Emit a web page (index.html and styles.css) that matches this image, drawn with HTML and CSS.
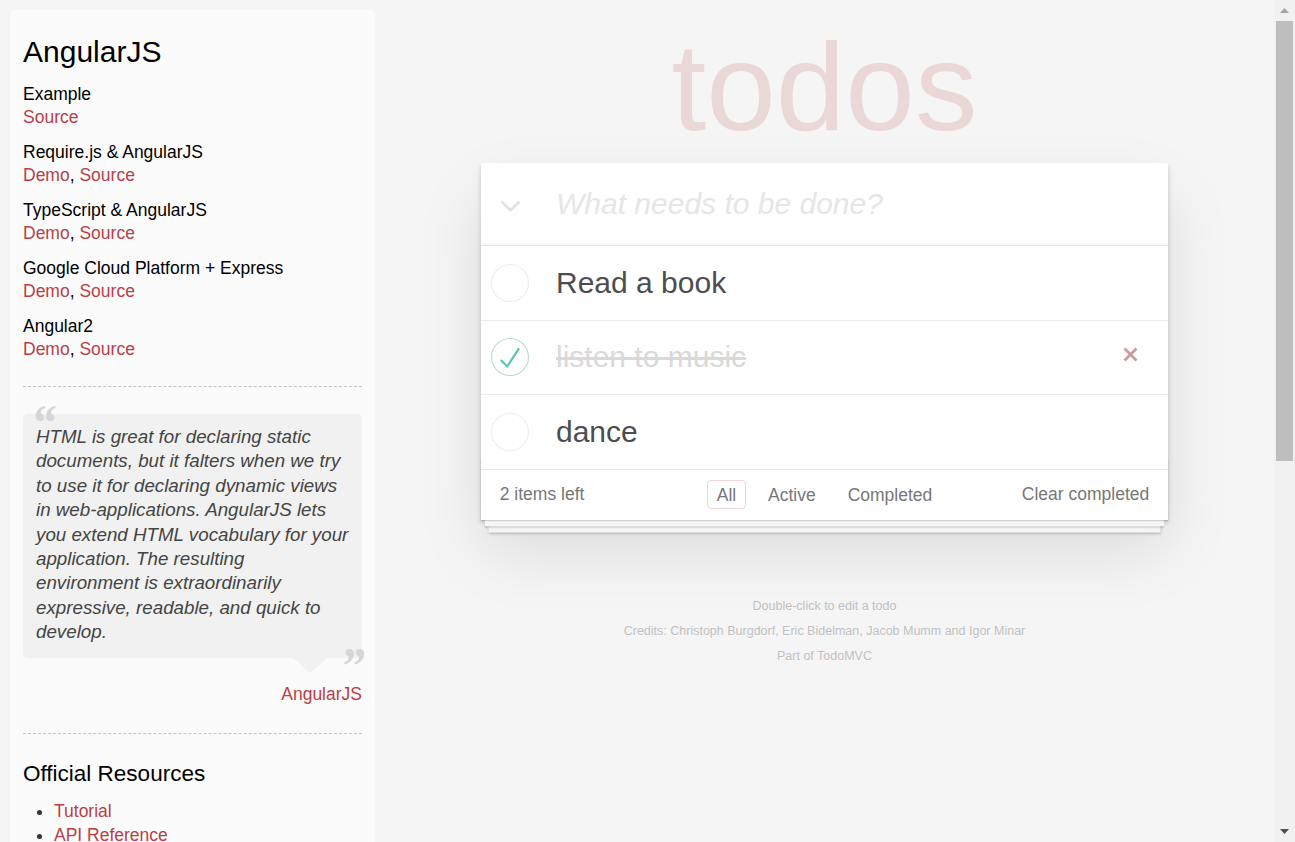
FILE: index.html
```html
<!DOCTYPE html>
<html lang="en">
<head>
<meta charset="utf-8">
<title>AngularJS • TodoMVC</title>
<link rel="stylesheet" href="styles.css">
</head>
<body>
<div class="page">
  <div class="content">
    <aside class="learn">
      <h2 class="learn-title">AngularJS</h2>
      <div class="examples">
        <div class="example">
          <div class="example-name">Example</div>
          <div class="example-links"><a href="#">Source</a></div>
        </div>
        <div class="example">
          <div class="example-name">Require.js &amp; AngularJS</div>
          <div class="example-links"><a href="#">Demo</a>, <a href="#">Source</a></div>
        </div>
        <div class="example">
          <div class="example-name">TypeScript &amp; AngularJS</div>
          <div class="example-links"><a href="#">Demo</a>, <a href="#">Source</a></div>
        </div>
        <div class="example">
          <div class="example-name">Google Cloud Platform + Express</div>
          <div class="example-links"><a href="#">Demo</a>, <a href="#">Source</a></div>
        </div>
        <div class="example">
          <div class="example-name">Angular2</div>
          <div class="example-links"><a href="#">Demo</a>, <a href="#">Source</a></div>
        </div>
      </div>
      <hr class="divider">
      <blockquote class="quote">
        <p>HTML is great for declaring static documents, but it falters when we try to use it for declaring dynamic views in web-applications. AngularJS lets you extend HTML vocabulary for your application. The resulting environment is extraordinarily expressive, readable, and quick to develop.</p>
        <span class="quote-tail"></span>
      </blockquote>
      <div class="quote-source"><a href="#">AngularJS</a></div>
      <hr class="divider divider-second">
      <h3 class="res-title">Official Resources</h3>
      <ul class="res-list">
        <li><a href="#">Tutorial</a></li>
        <li><a href="#">API Reference</a></li>
      </ul>
    </aside>

    <main class="app-col">
      <h1 class="logo">todos</h1>
      <section class="todoapp">
        <header class="header">
          <span class="toggle-all">
            <svg width="21" height="12" viewBox="0 0 21 12"><polyline points="1.5,1.5 10.5,10.3 19.5,1.5" fill="none" stroke="#e3e3e3" stroke-width="2.6"/></svg>
          </span>
          <input class="new-todo" type="text" placeholder="What needs to be done?">
        </header>
        <ul class="todo-list">
          <li class="todo">
            <span class="toggle">
              <svg width="38" height="38" viewBox="-1.5 -1.5 103 103"><circle cx="50" cy="50" r="50" fill="none" stroke="#ededed" stroke-width="3"/></svg>
            </span>
            <label class="todo-label">Read a book</label>
          </li>
          <li class="todo completed">
            <span class="toggle">
              <svg width="38" height="38" viewBox="-1.5 -1.5 103 103"><circle cx="50" cy="50" r="50" fill="none" stroke="#bddad5" stroke-width="3"/><path fill="#5dc2af" d="M72 25L42 71 27 56l-4 4 20 20 34-52z"/></svg>
            </span>
            <label class="todo-label">listen to music</label>
            <span class="destroy">
              <svg width="15" height="15" viewBox="0 0 15 15"><path d="M1.5 1.5L13.5 13.5M13.5 1.5L1.5 13.5" stroke="#cc9a9a" stroke-width="2.8" fill="none"/></svg>
            </span>
          </li>
          <li class="todo">
            <span class="toggle">
              <svg width="38" height="38" viewBox="-1.5 -1.5 103 103"><circle cx="50" cy="50" r="50" fill="none" stroke="#ededed" stroke-width="3"/></svg>
            </span>
            <label class="todo-label">dance</label>
          </li>
        </ul>
        <footer class="footer">
          <span class="todo-count">2 items left</span>
          <ul class="filters">
            <li><a href="#" class="selected">All</a></li>
            <li><a href="#">Active</a></li>
            <li><a href="#">Completed</a></li>
          </ul>
          <span class="clear-completed">Clear completed</span>
        </footer>
      </section>
      <div class="info">
        <p>Double-click to edit a todo</p>
        <p>Credits: Christoph Burgdorf, Eric Bidelman, Jacob Mumm and Igor Minar</p>
        <p>Part of TodoMVC</p>
      </div>
    </main>
  </div>

  <div class="scrollbar">
    <span class="sb-arrow">
      <svg width="9" height="5" viewBox="0 0 9 5"><polygon points="0,5 4.5,0 9,5" fill="#a3a3a3"/></svg>
    </span>
    <span class="sb-thumb"></span>
    <span class="sb-track"></span>
    <span class="sb-arrow">
      <svg width="9" height="5" viewBox="0 0 9 5"><polygon points="0,0 9,0 4.5,5" fill="#505050"/></svg>
    </span>
  </div>
</div>
</body>
</html>
```

FILE: styles.css
```css
* {
  box-sizing: border-box;
}

html,
body {
  margin: 0;
  padding: 0;
  height: 842px;
  overflow: hidden;
}

body {
  background: #f5f5f5;
  font-family: "Liberation Sans", Arial, Helvetica, sans-serif;
  color: #4d4d4d;
}

.page {
  display: flex;
  height: 842px;
}

.content {
  flex: 1;
  min-width: 0;
  display: flex;
  align-items: flex-start;
}

/* ---------- Learn sidebar ---------- */
.learn {
  flex: none;
  width: 365px;
  height: 832px;
  margin: 10px 0 0 10px;
  padding: 24px 13px 0 13px;
  background: #fbfbfb;
  border-radius: 5px 5px 0 0;
  overflow: hidden;
  color: #000;
  font-size: 17.5px;
  line-height: 23px;
}

.learn a {
  color: #b83f45;
  text-decoration: none;
}

.learn-title {
  margin: 0 0 12.5px;
  font-size: 30px;
  line-height: 36px;
  font-weight: normal;
}

.examples {
  display: flex;
  flex-direction: column;
  gap: 12px;
}

.divider {
  height: 0;
  margin: 25.5px 0 26px;
  border: 0;
  border-top: 1px dashed #c5c5c5;
  border-bottom: 1px dashed #f7f7f7;
}

.divider-second {
  margin: 27.5px 0 24.5px;
}

.quote {
  position: relative;
  margin: 0;
  padding: 11px 11px 13px 13px;
  background: #f1f1f1;
  border-radius: 5px;
}

.quote p {
  margin: 0;
  font-style: italic;
  font-size: 18.75px;
  color: #444;
  line-height: 24.4px;
}

.quote::before,
.quote::after {
  position: absolute;
  font-family: "Liberation Serif", "Times New Roman", serif;
  font-style: italic;
  font-weight: bold;
  font-size: 50px;
  line-height: 1;
  color: #d6d6d6;
}

.quote::before {
  content: "\201C";
  top: -17px;
  left: 8px;
}

.quote::after {
  content: "\201D";
  bottom: -32px;
  right: -3px;
}

.quote-tail {
  position: absolute;
  top: 100%;
  left: 270px;
  width: 0;
  height: 0;
  border-left: 17px solid transparent;
  border-right: 17px solid transparent;
  border-top: 15px solid #f1f1f1;
}

.quote-source {
  margin-top: 25px;
  text-align: right;
}

.res-title {
  margin: 0 0 12.5px;
  font-size: 22.5px;
  line-height: 27px;
  font-weight: normal;
}

.res-list {
  margin: 0;
  padding-left: 31px;
  color: #333;
}

.res-list li {
  line-height: 24px;
}

/* ---------- Todo app ---------- */
.app-col {
  flex: none;
  width: 687px;
  margin-left: 106px;
  padding-top: 24px;
}

.logo {
  height: 125px;
  margin: 0 0 14px;
  font-size: 125px;
  line-height: 125px;
  font-weight: normal;
  text-align: center;
  color: rgba(175, 47, 47, 0.15);
}

.todoapp {
  position: relative;
  background: #fff;
  box-shadow: 0 2.5px 5px 0 rgba(0, 0, 0, 0.2), 0 31px 62px 0 rgba(0, 0, 0, 0.1);
}

.header {
  display: flex;
  align-items: center;
  height: 82px;
  box-shadow: inset 0 -2px 1px rgba(0, 0, 0, 0.03);
}

.toggle-all {
  flex: none;
  width: 75px;
  display: flex;
  padding-left: 19px;
  margin-top: 4px;
}

.new-todo {
  flex: 1;
  min-width: 0;
  height: 82px;
  padding: 0 20px 0 0;
  border: 0;
  outline: 0;
  background: transparent;
  font-family: "Liberation Sans", Arial, Helvetica, sans-serif;
  font-size: 30px;
  line-height: 42px;
  color: #4d4d4d;
}

.new-todo::placeholder {
  font-style: italic;
  color: #e6e6e6;
}

.todo-list {
  margin: 0;
  padding: 0;
  list-style: none;
  border-top: 1px solid #e6e6e6;
}

.todo {
  display: flex;
  align-items: center;
  border-bottom: 1px solid #ededed;
}

.todo:last-child {
  border-bottom: none;
}

.toggle {
  flex: none;
  width: 75px;
  padding-left: 10px;
  display: flex;
}

.todo-label {
  flex: 1;
  min-width: 0;
  padding: 18.75px 0;
  font-size: 30px;
  line-height: 36px;
  color: #4d4d4d;
}

.todo.completed .todo-label {
  color: #d9d9d9;
  text-decoration: line-through;
}

.destroy {
  flex: none;
  display: flex;
  margin: 0 30px 5.5px 0;
}

.footer {
  position: relative;
  display: grid;
  grid-template-columns: 1fr auto 1fr;
  align-items: center;
  height: 51px;
  padding: 0 18.75px;
  border-top: 1px solid #e6e6e6;
  color: #777;
  font-size: 17.5px;
  line-height: 25px;
}

.footer::before {
  content: "";
  position: absolute;
  left: 0;
  right: 0;
  bottom: 0;
  height: 62.5px;
  pointer-events: none;
  box-shadow:
    0 1.25px 1.25px rgba(0, 0, 0, 0.2),
    0 10px 0 -3.75px #f6f6f6,
    0 11.25px 1.25px -3.75px rgba(0, 0, 0, 0.2),
    0 20px 0 -7.5px #f6f6f6,
    0 21.25px 2.5px -7.5px rgba(0, 0, 0, 0.2);
}

.todo-count {
  justify-self: start;
}

.filters {
  display: flex;
  gap: 12.4px;
  margin: 0;
  padding: 0;
  list-style: none;
}

.filters a {
  display: block;
  padding: 3.75px 8.75px;
  border: 1px solid transparent;
  border-radius: 4px;
  color: inherit;
  text-decoration: none;
  line-height: 20px;
}

.filters a.selected {
  border-color: rgba(175, 47, 47, 0.2);
}

.clear-completed {
  justify-self: end;
}

.info {
  margin-top: 80px;
  text-align: center;
  color: #bfbfbf;
  font-size: 12.5px;
  text-shadow: 0 1px 0 rgba(255, 255, 255, 0.5);
}

.info p {
  margin: 0 0 12.5px;
  line-height: 12.5px;
}

/* ---------- Scrollbar ---------- */
.scrollbar {
  flex: none;
  width: 21px;
  display: flex;
  flex-direction: column;
  align-items: center;
  background: #f1f1f1;
}

.sb-arrow {
  height: 21px;
  width: 21px;
  display: flex;
  align-items: center;
  justify-content: center;
}

.sb-thumb {
  width: 17px;
  height: 440px;
  background: #bebebe;
}

.sb-track {
  flex: 1;
}
```
